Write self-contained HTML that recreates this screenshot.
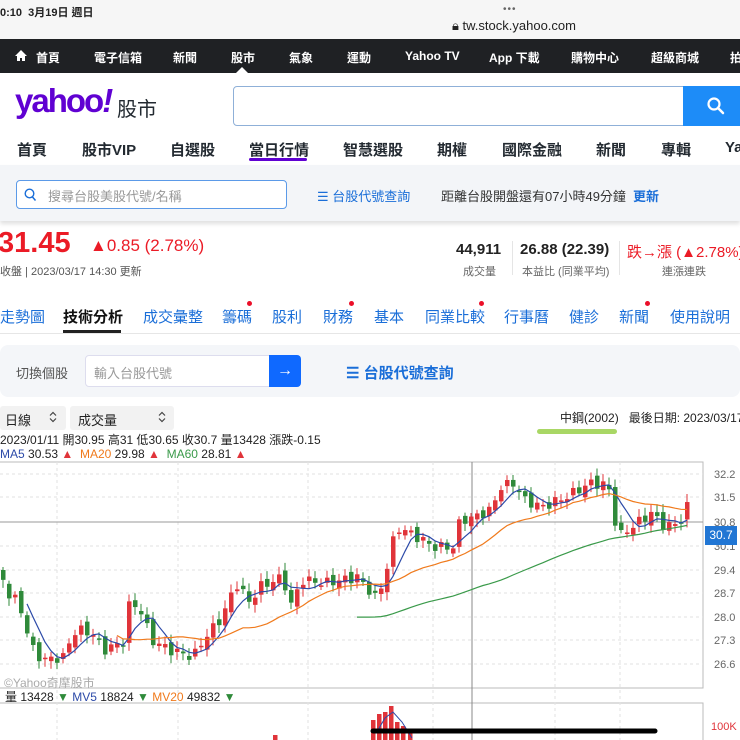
<!DOCTYPE html>
<html><head><meta charset="utf-8">
<style>
*{margin:0;padding:0;box-sizing:border-box}
body{width:740px;height:740px;overflow:hidden;background:#fff;font-family:"Liberation Sans","Noto Sans CJK TC",sans-serif;position:relative;color:#222}
.a{position:absolute;white-space:nowrap}
.nav span{position:absolute;top:49px;color:#fff;font-size:12px;font-weight:bold}
.menu span{position:absolute;top:139px;font-size:15px;color:#232a31;font-weight:bold}
.tabs span{position:absolute;top:306px;font-size:15px;color:#1a6ed8}
.dot{position:absolute;width:5px;height:5px;border-radius:50%;background:#eb0f29;top:301px}
</style></head><body>
<div class="a" style="left:0;top:0;width:740px;height:39px;background:#f6f6f6"></div>
<div class="a" style="left:0;top:4px;font-size:11px;font-weight:bold">0:10&nbsp;&nbsp;3月19日 週日</div>
<div class="a" style="left:503px;top:4px;font-size:10px;color:#666;letter-spacing:1px">•••</div>
<div class="a" style="left:452px;top:18px;font-size:13px;color:#222">&#128274;&#xFE0E; tw.stock.yahoo.com</div>
<div class="a" style="left:0;top:39px;width:740px;height:34px;background:#1f2124"></div>
<div class="nav">
<svg class="a" style="left:15px;top:50px" width="12" height="11" viewBox="0 0 12 11"><path d="M6 0L0 6h2v5h3V8h2v3h3V6h2z" fill="#fff"/></svg>
<span style="left:36px">首頁</span><span style="left:94px">電子信箱</span><span style="left:173px">新聞</span><span style="left:231px">股市</span><span style="left:289px">氣象</span><span style="left:347px">運動</span><span style="left:405px">Yahoo TV</span><span style="left:489px">App 下載</span><span style="left:571px">購物中心</span><span style="left:651px">超級商城</span><span style="left:730px">拍</span>
</div>
<div class="a" style="left:236px;top:67px;width:0;height:0;border-left:6px solid transparent;border-right:6px solid transparent;border-bottom:6px solid #fff"></div>
<div class="a" style="left:15px;top:82px;font-size:33px;font-weight:bold;color:#6001d2;letter-spacing:-2px;font-family:'Liberation Sans',sans-serif">yahoo<i>!</i></div>
<div class="a" style="left:117px;top:93px;font-size:20px;color:#232a31">股市</div>
<div class="a" style="left:233px;top:86px;width:452px;height:40px;border:1px solid #8fb0d8;border-radius:4px 0 0 4px;background:#fff"></div>
<div class="a" style="left:683px;top:86px;width:57px;height:40px;background:#1d8cf8"></div>
<svg class="a" style="left:707px;top:97px" width="18" height="18" viewBox="0 0 18 18"><circle cx="7" cy="7" r="5.5" stroke="#fff" stroke-width="2.2" fill="none"/><path d="M11 11l5 5" stroke="#fff" stroke-width="2.5" stroke-linecap="round"/></svg>
<div class="menu"><span style="left:17px">首頁</span><span style="left:82px">股市VIP</span><span style="left:170px">自選股</span><span style="left:249px">當日行情</span><span style="left:343px">智慧選股</span><span style="left:437px">期權</span><span style="left:502px">國際金融</span><span style="left:596px">新聞</span><span style="left:661px">專輯</span><span style="left:725px">Ya</span></div>
<div class="a" style="left:249px;top:158px;width:58px;height:3px;background:#6001d2;border-radius:2px"></div>
<div class="a" style="left:0;top:165px;width:740px;height:56px;background:#f3f5f8;box-shadow:0 3px 4px rgba(0,0,0,0.12)"></div>
<div class="a" style="left:16px;top:180px;width:271px;height:29px;border:1px solid #5b9ae8;border-radius:4px;background:#fff"></div>
<svg class="a" style="left:24px;top:188px" width="13" height="14" viewBox="0 0 13 14"><circle cx="5.5" cy="5.5" r="4.3" stroke="#1a6ed8" stroke-width="1.4" fill="none"/><path d="M8.5 9l3 3.5" stroke="#1a6ed8" stroke-width="1.5"/></svg>
<div class="a" style="left:48px;top:186px;font-size:13px;color:#999">搜尋台股美股代號/名稱</div>
<div class="a" style="left:317px;top:186px;font-size:13px;color:#1a6ed8">☰ 台股代號查詢</div>
<div class="a" style="left:441px;top:186px;font-size:13px;color:#333">距離台股開盤還有07小時49分鐘</div>
<div class="a" style="left:633px;top:186px;font-size:13px;color:#1a6ed8;font-weight:bold">更新</div>
<div class="a" style="left:-2px;top:227px;font-size:29px;font-weight:bold;color:#eb1b26">31.45</div>
<div class="a" style="left:90px;top:236px;font-size:17px;color:#eb1b26">▲0.85 (2.78%)</div>
<div class="a" style="left:0;top:263px;font-size:11px;color:#555">收盤 | 2023/03/17 14:30 更新</div>
<div class="a" style="left:456px;top:241px;font-size:15px;font-weight:bold">44,911</div>
<div class="a" style="left:463px;top:263px;font-size:11px;color:#666">成交量</div>
<div class="a" style="left:512px;top:241px;width:1px;height:34px;background:#e5e5e5"></div>
<div class="a" style="left:520px;top:241px;font-size:15px;font-weight:bold">26.88 (22.39)</div>
<div class="a" style="left:522px;top:263px;font-size:11px;color:#666">本益比 (同業平均)</div>
<div class="a" style="left:619px;top:241px;width:1px;height:34px;background:#e5e5e5"></div>
<div class="a" style="left:627px;top:241px;font-size:15px;color:#eb1b26">跌→漲 (▲2.78%)</div>
<div class="a" style="left:662px;top:263px;font-size:11px;color:#666">連漲連跌</div>
<div class="tabs"><span style="left:0">走勢圖</span><span style="left:63px;color:#111;font-weight:bold">技術分析</span><span style="left:143px">成交彙整</span><span style="left:222px">籌碼</span><span style="left:272px">股利</span><span style="left:323px">財務</span><span style="left:374px">基本</span><span style="left:425px">同業比較</span><span style="left:504px">行事曆</span><span style="left:569px">健診</span><span style="left:619px">新聞</span><span style="left:670px">使用說明</span></div>
<div class="dot" style="left:247px"></div><div class="dot" style="left:349px"></div><div class="dot" style="left:479px"></div><div class="dot" style="left:645px"></div>
<div class="a" style="left:0;top:333px;width:740px;height:1px;background:#e6e6e6"></div>
<div class="a" style="left:63px;top:330px;width:58px;height:3px;background:#222"></div>
<div class="a" style="left:0;top:345px;width:740px;height:52px;background:#f4f6f9;border-radius:8px"></div>
<div class="a" style="left:16px;top:363px;font-size:13px;color:#555">切換個股</div>
<div class="a" style="left:85px;top:355px;width:186px;height:32px;background:#fff;border:1px solid #dde;border-radius:4px 0 0 4px"></div>
<div class="a" style="left:94px;top:363px;font-size:13px;color:#999">輸入台股代號</div>
<div class="a" style="left:269px;top:355px;width:32px;height:32px;background:#0f69ff;border-radius:0 4px 4px 0;color:#fff;font-size:16px;text-align:center;line-height:31px">→</div>
<div class="a" style="left:346px;top:362px;font-size:15px;color:#1a6ed8;font-weight:bold">☰ 台股代號查詢</div>
<div class="a" style="left:0;top:406px;width:66px;height:24px;background:#f2f2f2;border-radius:3px"></div>
<div class="a" style="left:5px;top:410px;font-size:13px">日線</div>
<div class="a" style="left:70px;top:406px;width:104px;height:24px;background:#f2f2f2;border-radius:3px"></div>
<div class="a" style="left:78px;top:410px;font-size:13px">成交量</div>
<svg class="a" style="left:49px;top:411px" width="8" height="12"><path d="M1 4.5L4 1.5 7 4.5M1 7.5L4 10.5 7 7.5" stroke="#444" fill="none" stroke-width="1.2"/></svg>
<svg class="a" style="left:158px;top:411px" width="8" height="12"><path d="M1 4.5L4 1.5 7 4.5M1 7.5L4 10.5 7 7.5" stroke="#444" fill="none" stroke-width="1.2"/></svg>
<div class="a" style="left:560px;top:409px;font-size:12px">中鋼(2002)&nbsp;&nbsp;&nbsp;最後日期: 2023/03/17</div>
<div class="a" style="left:537px;top:429px;width:80px;height:5px;background:#9ad04a;border-radius:3px;opacity:.85"></div>
<div class="a" style="left:0;top:431px;font-size:12px">2023/01/11 開30.95 高31 低30.65 收30.7 量13428 漲跌-0.15</div>
<div class="a" style="left:0;top:447px;font-size:12px"><span style="color:#2c4aa8">MA5</span> 30.53 <span style="color:#e0343a">▲</span>&nbsp; <span style="color:#f07a1c">MA20</span> 29.98 <span style="color:#e0343a">▲</span>&nbsp; <span style="color:#3a9a4a">MA60</span> 28.81 <span style="color:#e0343a">▲</span></div>
<svg id="ch" class="a" style="left:0;top:0" width="740" height="740"></svg>
<div class="a" style="left:4px;top:674px;font-size:12px;color:#aaa">©Yahoo奇摩股市</div>
<div class="a" style="left:5px;top:688px;font-size:12px">量 13428 <span style="color:#2f8a3a">▼</span> <span style="color:#2c4aa8">MV5</span> 18824 <span style="color:#2f8a3a">▼</span> <span style="color:#f07a1c">MV20</span> 49832 <span style="color:#2f8a3a">▼</span></div>
<div class="a" style="left:705px;top:526px;width:32px;height:19px;background:#2176d4;color:#fff;font-size:12px;text-align:center;line-height:19px">30.7</div>
<script>
var s='';
s+='<rect x="-1" y="462" width="704" height="226" fill="none" stroke="#bbb"/>';
s+='<rect x="-1" y="703" width="704" height="60" fill="none" stroke="#bbb"/>';
var py=[474,497,522,546,570,593,617,640,664],pl=['32.2','31.5','30.8','30.1','29.4','28.7','28.0','27.3','26.6'];
for(var i=0;i<py.length;i++){s+='<line x1="0" x2="703" y1="'+py[i]+'" y2="'+py[i]+'" stroke="#e2e2e2" stroke-dasharray="3,3"/>';s+='<text x="714" y="'+(py[i]+4)+'" font-size="11" fill="#666" font-family="Liberation Sans">'+pl[i]+'</text>';}
[57,178,308,433,555,620].forEach(function(x){s+='<line x1="'+x+'" x2="'+x+'" y1="462" y2="740" stroke="#e2e2e2" stroke-dasharray="3,3"/>';});
s+='<line x1="472" x2="472" y1="462" y2="740" stroke="#888"/>';
s+='<line x1="0" x2="703" y1="522" y2="522" stroke="#999"/>';
var P=[[0,570],[7,593],[19,603],[31,647],[42,660],[57,658],[66,657],[71,633],[83,630],[94,635],[104,650],[123,642],[130,600],[142,613],[151,640],[170,650],[193,657],[203,640],[222,617],[236,583],[250,603],[259,587],[283,577],[290,607],[302,580],[325,583],[358,577],[377,600],[389,560],[396,527],[410,533],[434,547],[453,547],[460,520],[472,518],[491,510],[500,487],[514,483],[524,500],[542,507],[566,497],[590,483],[608,485],[618,537],[637,523],[651,513],[665,527],[679,523],[689,503]];
function f(x){for(var i=1;i<P.length;i++){if(x<=P[i][0]){var a=P[i-1],b=P[i];return a[1]+(b[1]-a[1])*(x-a[0])/(b[0]-a[0]);}}return P[P.length-1][1];}
var cl=[],prev=570,N=115;
for(var i=0;i<N;i++){var x=i*6+3;var c=f(x)+Math.sin(i*2.3)*5;var o=prev+Math.sin(i*1.7)*4;cl.push(c);
var hi=Math.min(o,c)-3-Math.abs(Math.sin(i*3.1))*5,lo=Math.max(o,c)+3+Math.abs(Math.cos(i*2.7))*5;
var col=c<o?'#e0343a':'#2f8a3a';var t=Math.min(o,c),h=Math.max(Math.abs(o-c),1.5);
s+='<line x1="'+x+'" x2="'+x+'" y1="'+hi+'" y2="'+lo+'" stroke="'+col+'" stroke-width="1"/>';
s+='<rect x="'+(x-2)+'" y="'+t+'" width="4.5" height="'+h+'" fill="'+col+'"/>';prev=c;}
function ma(n,col){var d='';for(var i=n-1;i<N;i++){var m=0;for(var k=i-n+1;k<=i;k++)m+=cl[k];m/=n;d+=(d?'L':'M')+(i*6+3)+' '+m.toFixed(1);}s+='<path d="'+d+'" stroke="'+col+'" fill="none" stroke-width="1.2"/>';}
ma(5,'#2c4aa8');ma(20,'#f07a1c');ma(60,'#3a9a4a');
var vb=[[373,720],[379,714],[385,712],[391,706],[397,722],[403,726],[275,735],[410,730]];
vb.forEach(function(v){s+='<rect x="'+(v[0]-2)+'" y="'+v[1]+'" width="4.5" height="'+(740-v[1])+'" fill="#e0343a"/>';});
s+='<path d="M378 730L385 718 393 712 402 722 412 738" stroke="#2c4aa8" fill="none"/>';
s+='<text x="711" y="730" font-size="11" fill="#e0343a" font-family="Liberation Sans">100K</text>';
s+='<line x1="373" x2="655" y1="731" y2="731" stroke="#000" stroke-width="5" stroke-linecap="round"/>';
document.getElementById('ch').innerHTML=s;
</script>
</body></html>
